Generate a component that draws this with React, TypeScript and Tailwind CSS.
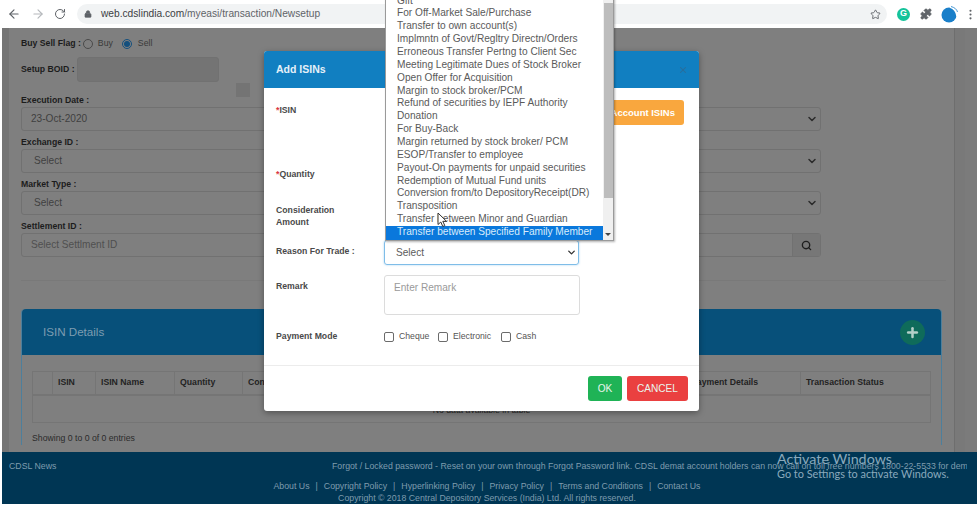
import { ArrowLeft, ArrowRight, ChevronDown, Lock, MoreVertical, Plus, Puzzle, RotateCw, Search, Star, X } from 'lucide-react';

const reasons = [
  'Gift',
  'For Off-Market Sale/Purchase',
  'Transfer to own account(s)',
  'Implmntn of Govt/Regltry Directn/Orders',
  'Erroneous Transfer Pertng to Client Sec',
  'Meeting Legitimate Dues of Stock Broker',
  'Open Offer for Acquisition',
  'Margin to stock broker/PCM',
  'Refund of securities by IEPF Authority',
  'Donation',
  'For Buy-Back',
  'Margin returned by stock broker/ PCM',
  'ESOP/Transfer to employee',
  'Payout-On payments for unpaid securities',
  'Redemption of Mutual Fund units',
  'Conversion from/to DepositoryReceipt(DR)',
  'Transposition',
  'Transfer between Minor and Guardian',
];

const columns = [
  { label: '', width: 'w-[20px]' },
  { label: 'ISIN', width: 'w-[43px]' },
  { label: 'ISIN Name', width: 'w-[79px]' },
  { label: 'Quantity', width: 'w-[68px]' },
  { label: 'Consideration Amount', width: 'w-[443px]' },
  { label: 'Payment Details', width: 'w-[115px]' },
  { label: 'Transaction Status', width: 'flex-1' },
];

function PageField({ label, value, indent }: { label: string; value: string; indent: string }) {
  return (
    <div className="mb-[4px]">
      <div className="h-[14px] text-[8.7px] font-bold leading-[14px] text-[#1c1c1c]">{label}</div>
      <div className={`flex h-[24px] w-[800px] items-center justify-between rounded-[3px] border border-[#717171] pr-[2px] text-[10.1px] text-[#3f3f3f] ${indent}`}>
        <span>{value}</span>
        <ChevronDown size={12} strokeWidth={3} className="text-[#2b2b2b]" />
      </div>
    </div>
  );
}

function Check({ label, width }: { label: string; width: string }) {
  return (
    <div className={`flex items-center gap-[5px] ${width}`}>
      <span className="mt-[2px] h-[10px] w-[10px] rounded-[2px] border border-[#6b6b6b] bg-white" />
      <span className="text-[8.7px] text-[#555555]">{label}</span>
    </div>
  );
}

export default function App() {
  return (
    <div className="relative h-[506px] w-[979px] overflow-hidden bg-white font-['Liberation_Sans',sans-serif]">
      {/* browser toolbar */}
      <div className="flex h-[28px] items-center pl-[7px]">
        <ArrowLeft size={14} className="text-[#5f6368]" />
        <ArrowRight size={14} className="ml-[10px] text-[#b5b8bc]" />
        <RotateCw size={12} className="ml-[9px] text-[#5f6368]" />
        <div className="ml-[11px] flex h-[20px] w-[810px] items-center justify-between rounded-full bg-[#f1f3f4] pl-[7px] pr-[6px]">
          <div className="flex items-center gap-[9px]">
            <Lock size={8} fill="#5f6368" className="text-[#5f6368]" />
            <span className="text-[10.2px] text-[#3c4043]">
              web.cdslindia.com<span className="text-[#5f6368]">/myeasi/transaction/Newsetup</span>
            </span>
          </div>
          <Star size={11} strokeWidth={2} className="text-[#5f6368]" />
        </div>
        <div className="ml-[10px] flex h-[13px] w-[13px] items-center justify-center rounded-full bg-[#15c39a] text-[9px] font-bold text-white">
          G
        </div>
        <Puzzle size={12} fill="#5f6368" className="ml-[10px] text-[#5f6368]" />
        <svg width="17" height="17" viewBox="0 0 17 17" className="ml-[9px]">
          <circle cx="8" cy="9" r="7.5" fill="#1a7fc9" />
          <path d="M9 1 Q15 3 16 10" fill="none" stroke="#ffffff" strokeWidth="1.5" />
          <path d="M10 0.5 Q15.5 2 16.5 6" fill="none" stroke="#1a7fc9" strokeWidth="0.8" />
        </svg>
        <MoreVertical size={13} className="ml-[6px] text-[#5f6368]" />
      </div>

      {/* dimmed page */}
      <div className="ml-[2px] flex h-[476px] w-[975px] flex-col bg-[#7f7f7f]">
        <div className="flex min-h-0 flex-1">
          <div className="w-[7px] bg-[#757575]" />
          <div className="flex-1 overflow-hidden pl-[12px] pt-[9px]">
            <div className="flex h-[14px] items-center text-[8.7px] text-[#3a3a3a]">
              <span className="font-bold text-[#1c1c1c]">Buy Sell Flag :</span>
              <span className="ml-[2px] h-[10px] w-[10px] rounded-full border border-[#4a4a4a]" />
              <span className="ml-[5px]">Buy</span>
              <span className="ml-[9px] flex h-[10px] w-[10px] items-center justify-center rounded-full border border-[#14507e]">
                <span className="h-[6px] w-[6px] rounded-full bg-[#14507e]" />
              </span>
              <span className="ml-[6px]">Sell</span>
            </div>
            <div className="mt-[6px] flex h-[25px] items-center">
              <span className="w-[56px] text-[8.7px] font-bold text-[#1c1c1c]">Setup BOID :</span>
              <div className="h-[25px] w-[142px] rounded-[3px] border border-[#717171] bg-[#747474]" />
            </div>
            <div className="-mb-[4px] ml-[215px] mt-[1px] h-[14px] w-[14px] bg-[#747474]" />
            <PageField label="Execution Date :" value="23-Oct-2020" indent="pl-[9px]" />
            <PageField label="Exchange ID :" value="Select" indent="pl-[12px]" />
            <PageField label="Market Type :" value="Select" indent="pl-[12px]" />
            <div>
              <div className="h-[14px] text-[8.7px] font-bold leading-[14px] text-[#1c1c1c]">Settlement ID :</div>
              <div className="flex h-[24px] w-[800px] items-center justify-between rounded-[3px] border border-[#717171] pl-[9px] text-[10.1px] text-[#4f4f4f]">
                <span>Select Settlment ID</span>
                <div className="flex h-full w-[28px] items-center justify-center border-l border-[#717171] bg-[#777777]">
                  <Search size={11} strokeWidth={3} className="text-[#1f1f1f]" />
                </div>
              </div>
            </div>
            <div className="mt-[23px] h-px w-[925px] bg-[#797979]" />

            {/* ISIN card */}
            <div className="mt-[28px] w-[921px] rounded-t-[4px] border-x border-[#4d7f9c]">
              <div className="flex h-[46px] items-center justify-between rounded-t-[4px] bg-[#07507a] pl-[21px] pr-[16px]">
                <span className="text-[11.6px] text-[#7d9db1]">ISIN Details</span>
                <div className="flex h-[25px] w-[25px] items-center justify-center rounded-full bg-[#0f6b5a]">
                  <Plus size={15} strokeWidth={4} className="text-[#b5cfc8]" />
                </div>
              </div>
              <div className="px-[10px] pt-[16px]">
                <div className="flex h-[25px] border border-[#757575] border-b-2">
                  {columns.map((col) => (
                    <div
                      key={col.label}
                      className={`flex items-center border-r border-[#757575] pl-[5px] text-[8.7px] font-bold text-[#232323] last:border-r-0 ${col.width}`}
                    >
                      {col.label}
                    </div>
                  ))}
                </div>
                <div className="flex h-[27px] items-center justify-center border-x border-b border-[#757575] pt-[3px] text-[8.7px] text-[#2b2b2b]">
                  No data available in table
                </div>
                <div className="mt-[9px] text-[8.7px] text-[#2b2b2b]">Showing 0 to 0 of 0 entries</div>
              </div>
            </div>
          </div>
          <div className="ml-[2px] w-[11px] border-l border-[#6e6e6e] bg-[#797979]" />
          <div className="w-[12px] bg-[#7b7b7b]" />
        </div>

        {/* footer */}
        <div className="h-[52px] w-full bg-[#003654] pt-[1px] text-[8.75px] text-[#7f9cae]">
          <div className="flex h-[28px] items-center justify-between overflow-hidden pl-[7px] pr-[10px]">
            <span>CDSL News</span>
            <span className="w-[635px] overflow-hidden whitespace-nowrap">
              Forgot / Locked password - Reset on your own through Forgot Password link. CDSL demat account holders can now call on toll free numbers 1800-22-5533 for demat
            </span>
          </div>
          <div className="flex h-[12px] items-center justify-center gap-[6px] pr-[5px]">
            <span>About Us</span>
            <span>|</span>
            <span>Copyright Policy</span>
            <span>|</span>
            <span>Hyperlinking Policy</span>
            <span>|</span>
            <span>Privacy Policy</span>
            <span>|</span>
            <span>Terms and Conditions</span>
            <span>|</span>
            <span>Contact Us</span>
          </div>
          <div className="flex h-[11px] items-center justify-center pr-[5px]">
            Copyright © 2018 Central Depository Services (India) Ltd. All rights reserved.
          </div>
        </div>
      </div>

      {/* modal */}
      <div className="absolute left-[264px] top-[51px] flex h-[360px] w-[435px] flex-col rounded-[3px] bg-white shadow-[0_2px_6px_rgba(0,0,0,0.35)]">
        <div className="flex h-[37px] items-center justify-between rounded-t-[3px] bg-[#117fc1] pl-[12px] pr-[11px]">
          <span className="text-[10.5px] font-bold text-[#e4f0f8]">Add ISINs</span>
          <X size={10} strokeWidth={2.5} className="text-[#2a6d99]" />
        </div>
        <div className="flex flex-1 flex-col pl-[12px] text-[8.7px] font-bold leading-[12px] text-[#4a4a4a]">
          <div className="flex h-[80px] items-start justify-between pr-[15px] pt-[12px]">
            <span className="pt-[4px]"><span className="text-[#d9363e]">*</span>ISIN</span>
            <div className="flex h-[25px] w-[90px] items-center justify-end rounded-[3px] bg-[#f9a73e] pr-[9px] text-[9.5px] text-white">
              Account ISINs
            </div>
          </div>
          <div className="h-[36px]"><span className="text-[#d9363e]">*</span>Quantity</div>
          <div className="h-[36px]">Consideration<br />Amount</div>
          <div className="flex h-[25px] items-start">
            <span className="w-[108px] pt-[5px]">Reason For Trade :</span>
            <div className="flex h-[25px] w-[195px] items-center justify-between rounded-[3px] border border-[#7fbde8] pl-[11px] pr-[1px] text-[10.1px] font-normal text-[#5b5b5b] shadow-[0_0_2px_rgba(90,170,230,0.6)]">
              <span>Select</span>
              <ChevronDown size={11} strokeWidth={3} className="text-[#333333]" />
            </div>
          </div>
          <div className="mt-[10px] flex h-[40px] items-start">
            <span className="w-[108px] pt-[5px]">Remark</span>
            <div className="h-[40px] w-[196px] rounded-[3px] border border-[#dcdcdc] pl-[9px] pt-[6px] text-[10.1px] font-normal text-[#9a9a9a]">
              Enter Remark
            </div>
          </div>
          <div className="mt-[15px] flex h-[12px] items-center">
            <span className="w-[108px]">Payment Mode</span>
            <div className="flex font-normal">
              <Check label="Cheque" width="w-[54px]" />
              <Check label="Electronic" width="w-[63px]" />
              <Check label="Cash" width="w-[50px]" />
            </div>
          </div>
          <div className="-ml-[12px] mt-auto flex h-[46px] justify-end gap-[5px] border-t border-[#ececec] pr-[11px] pt-[10px] text-[10.1px] font-normal text-[#e8f5ec]">
            <div className="flex h-[25px] w-[34px] items-center justify-center rounded-[3px] bg-[#1fb356]">OK</div>
            <div className="flex h-[25px] w-[61px] items-center justify-center rounded-[3px] bg-[#ea4040]">CANCEL</div>
          </div>
        </div>
      </div>

      {/* open select list */}
      <div className="absolute left-[385px] top-[-6.5px] flex h-[247px] w-[229px] border border-[#9a9a9a] bg-white shadow-[1px_1px_2px_rgba(0,0,0,0.3)]">
        <div className="w-[217px] text-[10.13px] leading-[12.87px] text-[#5a5a5a]">
          {reasons.map((reason) => (
            <div key={reason} className="h-[12.87px] whitespace-nowrap pl-[11px]">
              {reason}
            </div>
          ))}
          <div className="mt-[0.5px] h-[13.5px] whitespace-nowrap bg-[#0a78dc] pl-[11px] text-[#d8ecfb]">
            Transfer between Specified Family Member
          </div>
        </div>
        <div className="relative flex-1 bg-[#f0f0f0]">
          <div className="ml-[1px] mt-[8px] h-[195px] w-[9px] bg-[#bdbdbd]" />
          <div className="absolute bottom-[4px] left-[2px] h-0 w-0 border-x-[3px] border-t-[3px] border-x-transparent border-t-[#444444]" />
        </div>
      </div>

      {/* mouse cursor */}
      <svg width="11" height="16" viewBox="0 0 11 16" className="absolute left-[437px] top-[212px]">
        <path d="M1 1 L1 12.5 L3.8 10 L5.8 14.5 L7.8 13.6 L5.8 9.3 L9.5 9.3 Z" fill="#ffffff" stroke="#333333" strokeWidth="1" />
      </svg>

      {/* windows watermark */}
      <div className="absolute left-[777px] top-[451px] font-['Lato',sans-serif] text-[#8aa9bc]">
        <div className="text-[14.3px] leading-[15px]">Activate Windows</div>
        <div className="text-[10.9px] leading-[15px]">Go to Settings to activate Windows.</div>
      </div>
    </div>
  );
}
